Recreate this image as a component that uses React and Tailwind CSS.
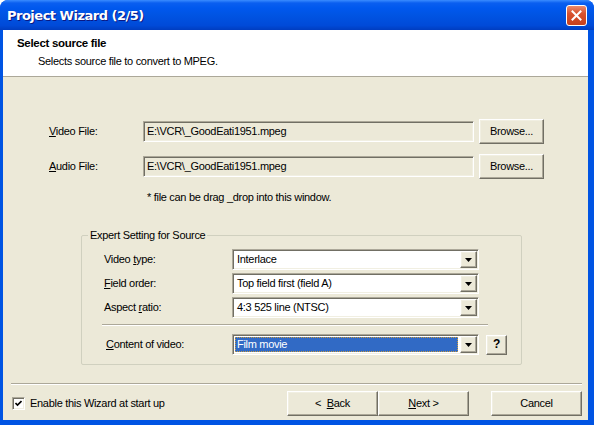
import React from "react";

const raised =
  "bg-[#ece9d8] border border-t-white border-l-white border-b-[#716f64] border-r-[#716f64] shadow-[inset_-1px_-1px_0_#aca899,inset_1px_1px_0_#f1efe2]";
const sunken =
  "border border-t-[#aca899] border-l-[#aca899] border-b-white border-r-white shadow-[inset_1px_1px_0_#716f64,inset_-1px_-1px_0_#f1efe2]";

const Arrow = () => (
  <svg width="7" height="4" viewBox="0 0 7 4">
    <polygon points="0,0 7,0 3.5,4" fill="#000" />
  </svg>
);

const Combo = ({ value, selected }) => (
  <div className={`w-[247px] h-[21px] bg-white flex items-center ${sunken}`}>
    <div className="flex-1 h-full p-[2px] flex">
      {selected ? (
        <div className="flex-1 bg-[#316ac5] text-white border border-dotted border-[#c89a40] flex items-center pl-[1px]">
          {value}
        </div>
      ) : (
        <div className="flex-1 flex items-center pl-[2px]">{value}</div>
      )}
    </div>
    <div className={`w-[17px] h-[17px] mr-[1px] flex items-center justify-center ${raised}`}>
      <Arrow />
    </div>
  </div>
);

const FileRow = ({ label, hot, value }) => (
  <div className="flex items-center pl-[46px] h-[25px]">
    <div className="w-[94px]">
      <span className="underline">{hot}</span>
      {label}
    </div>
    <div className={`w-[331px] h-[21px] flex items-center pl-[3px] ${sunken}`}>{value}</div>
    <div className={`w-[65px] h-[25px] ml-[5px] flex items-center justify-center ${raised}`}>Browse...</div>
  </div>
);

const SettingRow = ({ children, value }) => (
  <div className="flex items-center h-[21px]">
    <div className="w-[128px]">{children}</div>
    <Combo value={value} />
  </div>
);

export default function App() {
  return (
    <div className="w-[594px] h-[425px] flex flex-col bg-[#0054e3] rounded-t-[8px] overflow-hidden font-['Liberation_Sans',Arial,sans-serif] text-[11px] leading-[13px] tracking-[-0.3px] text-black">
      <div className="h-[30px] flex items-center pl-[7px] pr-[7px] bg-[linear-gradient(to_bottom,#3a8cff_0px,#0a5ff0_3px,#0058ee_8px,#0054e3_50%,#004ad8_85%,#003dc0_100%)]">
        <div className="text-white font-bold text-[13px] font-['DejaVu_Sans',sans-serif] tracking-[-0.5px] [text-shadow:1px_1px_#0a1883]">
          Project Wizard (2/5)
        </div>
        <div className="ml-auto w-[21px] h-[21px] rounded-[3px] border border-white bg-[linear-gradient(to_bottom,#e98a6c,#d8522f_40%,#c9401c)] flex items-center justify-center">
          <svg width="11" height="11" viewBox="0 0 11 11">
            <path d="M1.5 1.5 L9.5 9.5 M9.5 1.5 L1.5 9.5" stroke="#fff" strokeWidth="2" strokeLinecap="square" />
          </svg>
        </div>
      </div>

      <div className="flex-1 ml-[3px] mr-[6px] mb-[5px] flex flex-col bg-[#ece9d8]">
        <div className="h-[47px] bg-white border-b border-[#aca899] pl-[14px] pt-[6px]">
          <div className="font-bold text-[11.5px] leading-[14px]">Select source file</div>
          <div className="pl-[21px] mt-[5px]">Selects source file to convert to MPEG.</div>
        </div>

        <div className="mt-[42px]">
          <FileRow hot="V" label="ideo File:" value="E:\VCR\_GoodEati1951.mpeg" />
        </div>
        <div className="mt-[10px]">
          <FileRow hot="A" label="udio File:" value="E:\VCR\_GoodEati1951.mpeg" />
        </div>
        <div className="mt-[12px] pl-[144px]">* file can be drag _drop into this window.</div>

        <fieldset className="mt-[25px] ml-[78px] w-[441px] h-[136px] border border-[#d0d0bf] rounded-[2px]">
          <legend className="ml-[6px] px-[2px]">Expert Setting for Source</legend>
          <div className="pl-[22px] pt-[7px]">
            <div className="flex flex-col gap-[3px]">
              <SettingRow value="Interlace">
                Video <span className="underline">t</span>ype:
              </SettingRow>
              <SettingRow value="Top field first (field A)">
                <span className="underline">F</span>ield order:
              </SettingRow>
              <SettingRow value="4:3 525 line (NTSC)">
                Aspect <span className="underline">r</span>atio:
              </SettingRow>
            </div>
            <div className="mt-[6px] -ml-[2px] w-[386px] border-t border-b border-t-[#aca899] border-b-white" />
            <div className="mt-[8px] flex items-center h-[21px]">
              <div className="w-[128px] pl-[2px]">
                <span className="underline">C</span>ontent of video:
              </div>
              <Combo value="Film movie" selected />
              <div className={`w-[21px] h-[20px] ml-[7px] flex items-center justify-center font-bold text-[12px] ${raised}`}>?</div>
            </div>
          </div>
        </fieldset>

        <div className="mt-auto ml-[8px] mr-[6px] border-t border-b border-t-[#aca899] border-b-white" />
        <div className="mt-[6px] mb-[4px] flex items-center">
          <div className={`ml-[9px] w-[13px] h-[13px] bg-white flex items-center justify-center ${sunken}`}>
            <svg width="7" height="7" viewBox="0 0 7 7">
              <path d="M0.5 3 L2.5 5 L6.5 1" stroke="#000" strokeWidth="1.6" fill="none" />
            </svg>
          </div>
          <div className="ml-[5px]">Enable this Wizard at start up</div>
          <div className={`ml-auto w-[91px] h-[25px] flex items-center justify-center ${raised}`}>
            &lt;&nbsp;&nbsp;<span className="underline">B</span>ack
          </div>
          <div className={`w-[91px] h-[25px] flex items-center justify-center ${raised}`}>
            <span className="underline">N</span>ext &gt;
          </div>
          <div className={`ml-[22px] mr-[6px] w-[91px] h-[25px] flex items-center justify-center ${raised}`}>Cancel</div>
        </div>
      </div>
    </div>
  );
}
